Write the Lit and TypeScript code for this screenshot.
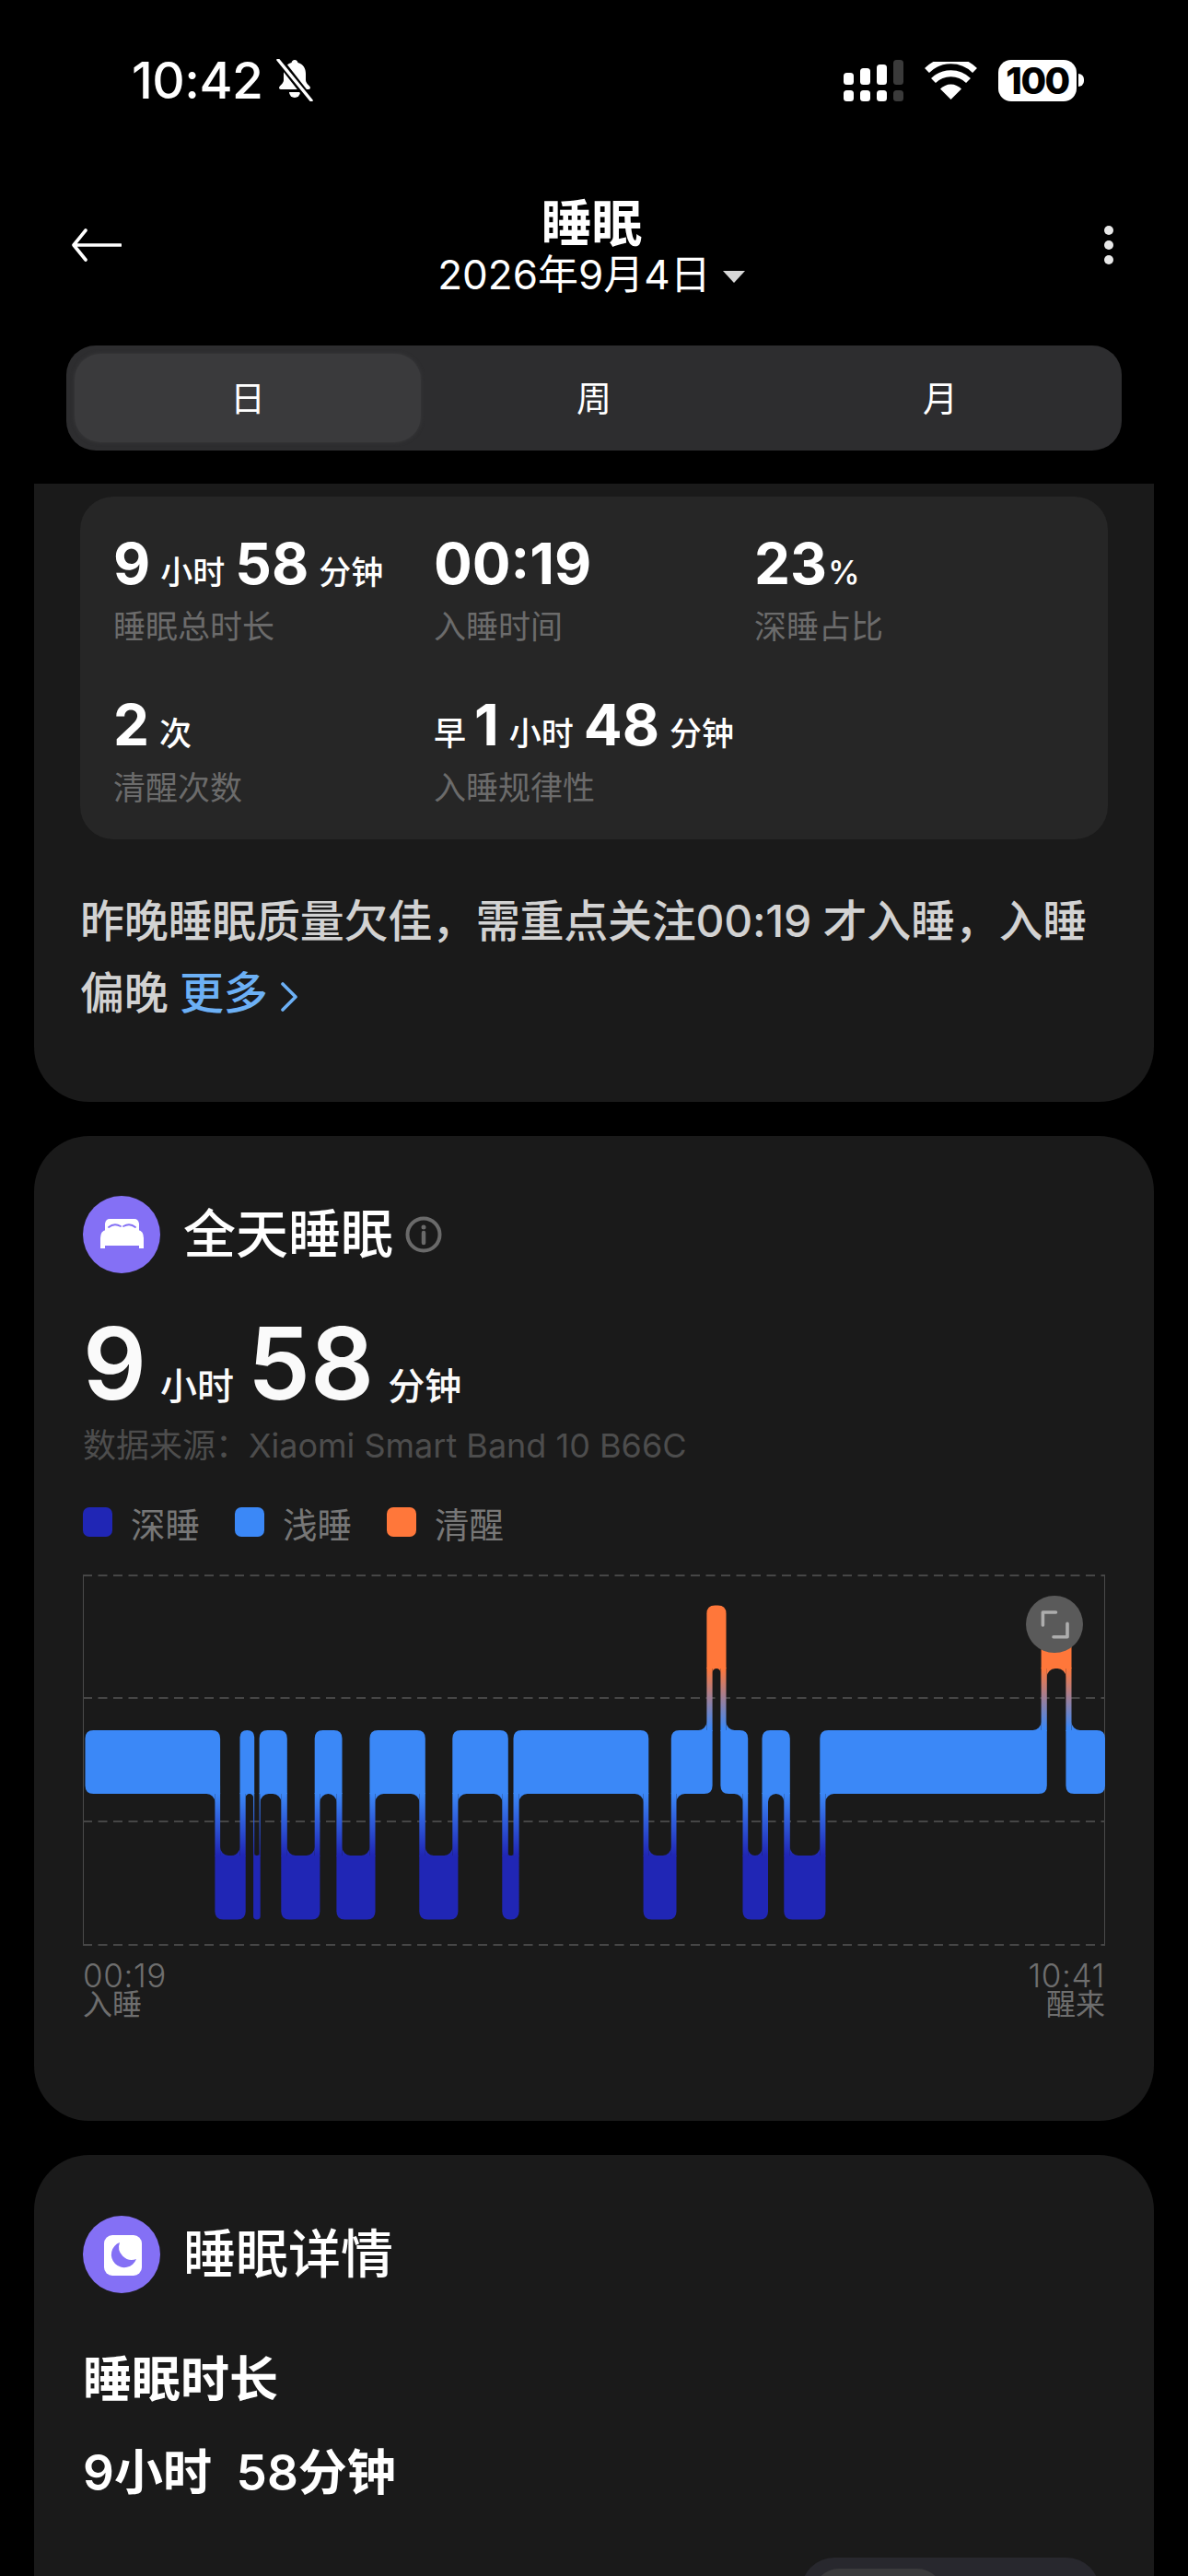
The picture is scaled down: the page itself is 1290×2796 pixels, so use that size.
import { LitElement, html, css, svg } from 'lit'
import { customElement } from 'lit/decorators.js'

type Stage = 'awake' | 'light' | 'deep'
type Block = [Stage, number, number]

const LEVELS: Record<Stage, [number, number]> = {
    awake: [33.5, 102],
    light: [169, 238],
    deep: [305, 374.5]
}

const BLOCKS: Block[] = [
    ['light', 2.5, 149.1],
    ['deep', 143.4, 176.7],
    ['light', 170.5, 186.2],
    ['deep', 185.1, 192.7],
    ['light', 191.6, 221.8],
    ['deep', 215.3, 257.4],
    ['light', 251.7, 281.5],
    ['deep', 275.4, 317.5],
    ['light', 311.4, 371.8],
    ['deep', 365.3, 407.4],
    ['light', 401.3, 461.8],
    ['deep', 455.3, 473.6],
    ['light', 467.5, 614.3],
    ['deep', 608.6, 644.5],
    ['light', 638.8, 683.6],
    ['awake', 677.4, 698.5],
    ['light', 692.4, 722.2],
    ['deep', 716.5, 744],
    ['light', 737.5, 767.8],
    ['deep', 761.3, 806.4],
    ['light', 800.3, 1046.8],
    ['awake', 1040.6, 1073.5],
    ['light', 1067.4, 1110]
]

const RADIUS = 9

const isAbove = (a: Block, b: Block) => LEVELS[a[0]][0] < LEVELS[b[0]][0]

// rounded rect for one stage, corners stay square where a connector joins
function blockPath(i: number) {
    const b = BLOCKS[i]
    const prev = BLOCKS[i - 1]
    const next = BLOCKS[i + 1]
    const [top, bottom] = LEVELS[b[0]]
    const [, x0, x1] = b
    const r = Math.min(RADIUS, (x1 - x0) / 2)
    const tl = prev && isAbove(prev, b) ? 0 : r
    const bl = prev && isAbove(b, prev) ? 0 : r
    const tr = next && isAbove(next, b) ? 0 : r
    const br = next && isAbove(b, next) ? 0 : r
    return `M${x0 + tl} ${top}H${x1 - tr}Q${x1} ${top} ${x1} ${top + tr}V${bottom - br}Q${x1} ${bottom} ${x1 - br} ${bottom}H${x0 + bl}Q${x0} ${bottom} ${x0} ${bottom - bl}V${top + tl}Q${x0} ${top} ${x0 + tl} ${top}Z`
}

function connectorPath(i: number) {
    const a = BLOCKS[i]
    const b = BLOCKS[i + 1]
    const upper = isAbove(a, b) ? a : b
    const lower = upper === a ? b : a
    const y0 = LEVELS[upper[0]][1] - 1
    const y1 = LEVELS[lower[0]][0] + 1
    return `M${b[1]} ${y0}H${a[2]}V${y1}H${b[1]}Z`
}

// concave corners where a connector leaves a block edge
function filletPaths(i: number) {
    const b = BLOCKS[i]
    const prev = BLOCKS[i - 1]
    const next = BLOCKS[i + 1]
    const out: string[] = []
    const add = (n: Block | undefined, other: Block | undefined, isPrev: boolean) => {
        if (!n) return
        const goesUp = isAbove(n, b)
        const p = isPrev ? n[2] : n[1]
        const dx = isPrev ? 1 : -1
        let avail: number
        if (other && isAbove(other, b) === goesUp) {
            const q = isPrev ? other[1] : other[2]
            avail = Math.abs(q - p) / 2
        } else {
            avail = Math.abs((isPrev ? b[2] : b[1]) - p) - RADIUS
        }
        const w = Math.max(0, Math.min(RADIUS, avail))
        if (!w) return
        const y = goesUp ? LEVELS[b[0]][0] : LEVELS[b[0]][1]
        const dy = goesUp ? -1 : 1
        const sweep = dx * dy > 0 ? 1 : 0
        out.push(`M${p} ${y + dy * w}A${w} ${w} 0 0 ${sweep} ${p + dx * w} ${y}V${y - dy * 0.6}H${p}Z`)
    }
    add(prev, next, true)
    add(next, prev, false)
    return out
}

function chartPieces() {
    const pieces: string[] = []
    BLOCKS.forEach((_, i) => {
        pieces.push(blockPath(i))
        pieces.push(...filletPaths(i))
        if (i < BLOCKS.length - 1) pieces.push(connectorPath(i))
    })
    return pieces
}

@customElement('app-root')
export class AppRoot extends LitElement {
    static styles = css`
        :host {
            display: block;
            width: 1290px;
            height: 2796px;
            overflow: hidden;
            background: #000;
            color: #fff;
            font-family: Inter, 'Noto Sans CJK SC', sans-serif;
        }

        .status {
            display: flex;
            align-items: center;
            justify-content: space-between;
            height: 46px;
            padding: 64px 113px 0 143px;
        }

        .status-left,
        .status-right {
            display: flex;
            align-items: center;
        }

        .clock {
            font-size: 55px;
            line-height: 46px;
            font-weight: 500;
            letter-spacing: -0.5px;
        }

        .bell {
            margin-left: 12px;
        }

        .wifi {
            margin: 0 23px 0 23px;
        }

        .battery {
            display: flex;
            align-items: center;
            gap: 2px;
        }

        .battery-body {
            width: 85px;
            height: 45px;
            border-radius: 14px;
            background: #fff;
            color: #000;
            font-size: 40px;
            font-weight: 800;
            line-height: 45px;
            text-align: center;
            letter-spacing: -1.5px;
        }

        .battery-nub {
            width: 6px;
            height: 14px;
            border-radius: 0 7px 7px 0;
            background: #fff;
        }

        .header {
            display: grid;
            grid-template-columns: 1fr auto 1fr;
            align-items: center;
            margin-top: 100px;
            padding: 0 83px 0 78px;
            height: 112px;
        }

        .back {
            width: 54px;
            height: 36px;
        }

        .more {
            display: flex;
            flex-direction: column;
            gap: 6px;
            justify-self: end;
            margin-right: -2px;
        }

        .more i {
            display: block;
            width: 10px;
            height: 10px;
            border-radius: 50%;
            background: #e8e8e8;
        }

        .heading {
            text-align: center;
        }

        .heading h1 {
            margin: 0;
            font-size: 55px;
            line-height: 64px;
            font-weight: 700;
        }

        .date {
            display: flex;
            align-items: center;
            justify-content: center;
            gap: 12px;
            font-size: 44px;
            line-height: 48px;
        }

        .caret {
            width: 26px;
            height: 14px;
            margin-top: 4px;
        }

        .tabs {
            display: grid;
            grid-template-columns: repeat(3, 1fr);
            margin: 53px 72px 0;
            padding: 9px;
            height: 96px;
            border-radius: 32px;
            background: #2d2d2f;
        }

        .tab {
            display: flex;
            align-items: center;
            justify-content: center;
            box-sizing: border-box;
            padding-bottom: 5px;
            border-radius: 28px;
            font-size: 38px;
        }

        .tab.on {
            background: #3a3a3c;
            box-shadow: 0 0 4px #3a3a3c;
        }

        .cards {
            display: flex;
            flex-direction: column;
            gap: 37px;
            margin-top: 36px;
            padding: 0 37px;
        }

        .card {
            background: #1a1a1a;
            border-radius: 60px;
        }

        .card-summary {
            height: 671px;
            box-sizing: border-box;
            padding: 14px 50px 0 50px;
            border-radius: 0 0 60px 60px;
        }

        .stats {
            display: grid;
            grid-template-columns: repeat(3, 348px);
            row-gap: 50px;
            box-sizing: border-box;
            height: 372px;
            padding: 38px 0 0 36px;
            border-radius: 36px;
            background: #262626;
            align-content: start;
        }

        .stat-value {
            height: 70px;
            font-size: 62px;
            line-height: 70px;
            font-weight: 700;
            white-space: nowrap;
        }

        .unit {
            font-size: 35px;
            font-weight: 500;
            margin: 0 11px;
        }

        .unit.end {
            margin-right: 0;
        }

        .unit.tight {
            margin-left: 1px;
        }

        .unit.lead {
            margin: 0 9px 0 0;
        }

        .stat-label {
            margin-top: 11px;
            font-size: 35px;
            line-height: 44px;
            color: #6b6b6b;
        }

        .summary {
            margin: 50px 0 0;
            font-size: 48px;
            line-height: 78px;
            font-weight: 500;
            letter-spacing: -0.25px;
            color: #d2d2d2;
            white-space: nowrap;
        }

        .link {
            color: #6cb0f5;
        }

        .chevron {
            width: 18px;
            height: 32px;
            margin-left: 14px;
            vertical-align: -3px;
        }

        .card-sleep {
            height: 1069px;
            box-sizing: border-box;
            padding: 65px 53px 0;
        }

        .card-head {
            display: flex;
            align-items: center;
        }

        .badge {
            width: 84px;
            height: 84px;
            flex: none;
        }

        .card-title {
            margin-left: 25px;
            font-size: 57px;
            font-weight: 500;
            line-height: 84px;
        }

        .info {
            width: 40px;
            height: 40px;
            margin-left: 13px;
        }

        .big-value {
            margin-top: 38px;
            height: 120px;
            font-size: 108px;
            line-height: 120px;
            font-weight: 600;
            color: #fafafa;
            white-space: nowrap;
        }

        .big-unit {
            font-size: 40px;
            font-weight: 500;
            margin: 0 15px 0 15px;
        }

        .source {
            margin-top: 7px;
            font-size: 36px;
            line-height: 44px;
            color: #4d4d4d;
            white-space: nowrap;
        }

        .legend {
            display: flex;
            margin-top: 39px;
            height: 44px;
            align-items: center;
        }

        .legend-item {
            display: flex;
            align-items: center;
            gap: 20px;
            font-size: 37.5px;
            color: #777;
            margin-right: 38px;
        }

        .swatch {
            width: 32px;
            height: 32px;
            border-radius: 7px;
        }

        .chart {
            position: relative;
            margin-top: 35px;
            width: 1110px;
            height: 403px;
        }

        .chart svg {
            display: block;
        }

        .expand {
            position: absolute;
            left: 1024px;
            top: 23px;
            width: 62px;
            height: 62px;
        }

        .times {
            display: flex;
            justify-content: space-between;
            width: 1110px;
            margin-top: 17px;
            color: #6e6e6e;
            font-size: 32px;
            line-height: 31px;
        }

        .times .clock-time {
            font-size: 35px;
            font-weight: 300;
            letter-spacing: 0.6px;
        }

        .times .right {
            text-align: right;
        }

        .card-detail {
            height: 600px;
            padding: 66px 53px 0;
            box-sizing: border-box;
        }

        .detail-name {
            margin-top: 62px;
            font-size: 53px;
            line-height: 64px;
            font-weight: 600;
        }

        .detail-value {
            margin-top: 37px;
            font-size: 53px;
            line-height: 64px;
            font-weight: 600;
            white-space: pre;
        }

        .pill-row {
            display: flex;
            justify-content: flex-end;
            margin: 60px 6px 0 0;
        }

        .pill {
            width: 324px;
            height: 114px;
            box-sizing: border-box;
            padding: 12px 13px;
            border-radius: 36px;
            background: #28282e;
        }

        .pill i {
            display: block;
            width: 141px;
            height: 90px;
            border-radius: 28px;
            background: #3a3a3c;
        }
    `

    renderStatus() {
        return html`
            <div class="status">
                <div class="status-left">
                    <span class="clock">10:42</span>
                    <svg class="bell" width="44" height="46" viewBox="0 0 44 46">
                        <path fill="#fff" d="M22 1c-2 0-3.2 1.4-3.4 3C12.5 5.6 10 10.5 10 16v7c0 3-3 5-4.5 7-1 1.5-.3 3 1.6 3h29.8c1.900 0 2.600-1.500 1.600-3-1.500-2-4.500-4-4.500-7v-7c0-5.500-2.500-10.400-8.600-12C25.200 2.400 24 1 22 1z" />
                        <path fill="#fff" d="M16 36a6 6 0 0012 0z" />
                        <path stroke="#000" stroke-width="8" d="M4 0l36 46" />
                        <path stroke="#fff" stroke-width="3.4" stroke-linecap="round" d="M4 1l36 44" />
                    </svg>
                </div>
                <div class="status-right">
                    <svg width="65" height="45" viewBox="0 0 65 45">
                        <rect x="0" y="14" width="11" height="13" rx="3.5" fill="#fff" />
                        <rect x="18" y="9" width="11" height="18" rx="3.5" fill="#fff" />
                        <rect x="36" y="5" width="11" height="22" rx="3.5" fill="#fff" />
                        <rect x="54" y="0" width="11" height="27" rx="3.5" fill="#3a3a3a" />
                        <rect x="0" y="33" width="11" height="12" rx="3.5" fill="#fff" />
                        <rect x="18" y="33" width="11" height="12" rx="3.5" fill="#fff" />
                        <rect x="36" y="33" width="11" height="12" rx="3.5" fill="#fff" />
                        <rect x="54" y="33" width="11" height="12" rx="3.5" fill="#3a3a3a" />
                    </svg>
                    <svg class="wifi" width="57" height="41" viewBox="0 0 57 41">
                        <path fill="#fff" d="M28.5 41L17 29.5a16 16 0 0 1 23 0z" />
                        <path fill="none" stroke="#fff" stroke-width="7" d="M9.500 20.500a27 27 0 0 1 38 0" />
                        <path fill="none" stroke="#fff" stroke-width="7" d="M2.500 9.500a37 37 0 0 1 52 0" />
                    </svg>
                    <div class="battery">
                        <div class="battery-body">100</div>
                        <div class="battery-nub"></div>
                    </div>
                </div>
            </div>
        `
    }

    renderHeader() {
        return html`
            <div class="header">
                <svg class="back" viewBox="0 0 54 36" fill="none" stroke="#fff" stroke-width="3.6" stroke-linecap="round" stroke-linejoin="round">
                    <path d="M53 18H2M15 2L2 18l13 16" />
                </svg>
                <div class="heading">
                    <h1>睡眠</h1>
                    <div class="date">
                        <span>2026年9月4日</span>
                        <svg class="caret" viewBox="0 0 26 14"><path fill="#d8d8d8" d="M1 1h24L13 14z" /></svg>
                    </div>
                </div>
                <div class="more"><i></i><i></i><i></i></div>
            </div>
            <div class="tabs">
                <div class="tab on">日</div>
                <div class="tab">周</div>
                <div class="tab">月</div>
            </div>
        `
    }

    renderSummary() {
        return html`
            <section class="card card-summary">
                <div class="stats">
                    <div>
                        <div class="stat-value">9<span class="unit">小时</span>58<span class="unit end">分钟</span></div>
                        <div class="stat-label">睡眠总时长</div>
                    </div>
                    <div>
                        <div class="stat-value">00:19</div>
                        <div class="stat-label">入睡时间</div>
                    </div>
                    <div>
                        <div class="stat-value">23<span class="unit end tight">%</span></div>
                        <div class="stat-label">深睡占比</div>
                    </div>
                    <div>
                        <div class="stat-value">2<span class="unit end">次</span></div>
                        <div class="stat-label">清醒次数</div>
                    </div>
                    <div>
                        <div class="stat-value"><span class="unit lead">早</span>1<span class="unit">小时</span>48<span class="unit end">分钟</span></div>
                        <div class="stat-label">入睡规律性</div>
                    </div>
                </div>
                <p class="summary">
                    昨晚睡眠质量欠佳，需重点关注00:19 才入睡，入睡<br />偏晚 <span class="link">更多<svg class="chevron" viewBox="0 0 18 32" fill="none" stroke="#6cb0f5" stroke-width="3.6" stroke-linecap="round" stroke-linejoin="round"><path d="M2 2l14 14L2 30" /></svg></span>
                </p>
            </section>
        `
    }

    renderChart() {
        const grid = [1, 134, 268, 402]
        return html`
            <div class="chart">
                <svg width="1110" height="403" viewBox="0 0 1110 403">
                    <defs>
                        <linearGradient id="stages" gradientUnits="userSpaceOnUse" x1="0" y1="102" x2="0" y2="305">
                            <stop offset="0" stop-color="#ff773a" />
                            <stop offset="0.32" stop-color="#3b88f7" />
                            <stop offset="0.67" stop-color="#3b88f7" />
                            <stop offset="1" stop-color="#2026b5" />
                        </linearGradient>
                    </defs>
                    <path d="M.5 0V403M1109.500 0V403" stroke="#4a4a4a" stroke-width="1" />
                    ${grid.map(y => svg`<path d="M0 ${y}H1110" stroke="#464646" stroke-width="2" stroke-dasharray="10 6.500" />`)}
                    <g fill="url(#stages)">
                        ${chartPieces().map(d => svg`<path d=${d} />`)}
                    </g>
                </svg>
                <svg class="expand" viewBox="0 0 62 62">
                    <circle cx="31" cy="31" r="31" fill="#5a5a5a" />
                    <path d="M18.400 32V18H32.500M30 44.800H45V30.200" fill="none" stroke="#adadad" stroke-width="3.6" stroke-linecap="round" stroke-linejoin="round" />
                </svg>
            </div>
        `
    }

    renderSleep() {
        return html`
            <section class="card card-sleep">
                <div class="card-head">
                    <svg class="badge" viewBox="0 0 84 84">
                        <circle cx="42" cy="42" r="42" fill="#8470f5" />
                        <path fill="#fff" d="M24 30q1-5 5-5h27q4 0 5 5v10H24z" />
                        <path fill="none" stroke="#8470f5" stroke-width="1.8" stroke-linecap="round" d="M28 34q6-5 13-1M44 33q7-4 13 1" />
                        <path fill="#fff" d="M19 46q0-8 6-9h35q6 1 6 9v8H19z" />
                        <rect x="19" y="53" width="5" height="4" fill="#fff" />
                        <rect x="61" y="53" width="5" height="4" fill="#fff" />
                    </svg>
                    <span class="card-title">全天睡眠</span>
                    <svg class="info" viewBox="0 0 40 40" fill="none" stroke="#6a6a6a">
                        <circle cx="20" cy="20" r="17.500" stroke-width="4" />
                        <path d="M20 18v11" stroke-width="4.500" stroke-linecap="round" />
                        <circle cx="20" cy="12" r="2.500" fill="#6a6a6a" stroke="none" />
                    </svg>
                </div>
                <div class="big-value">9<span class="big-unit">小时</span>58<span class="big-unit">分钟</span></div>
                <div class="source">数据来源：Xiaomi Smart Band 10 B66C</div>
                <div class="legend">
                    <div class="legend-item"><span class="swatch" style="background:#2026b5"></span>深睡</div>
                    <div class="legend-item"><span class="swatch" style="background:#3b88f7"></span>浅睡</div>
                    <div class="legend-item"><span class="swatch" style="background:#ff773a"></span>清醒</div>
                </div>
                ${this.renderChart()}
                <div class="times">
                    <div><div class="clock-time">00:19</div><div>入睡</div></div>
                    <div class="right"><div class="clock-time">10:41</div><div>醒来</div></div>
                </div>
            </section>
        `
    }

    renderDetail() {
        return html`
            <section class="card card-detail">
                <div class="card-head">
                    <svg class="badge" viewBox="0 0 84 84">
                        <circle cx="42" cy="42" r="42" fill="#8470f5" />
                        <rect x="23" y="21" width="41" height="44" rx="9" fill="#fff" />
                        <path fill="#8470f5" d="M40 29A14 14 0 1 0 58 47A14 14 0 0 1 40 29Z" />
                    </svg>
                    <span class="card-title">睡眠详情</span>
                </div>
                <div class="detail-name">睡眠时长</div>
                <div class="detail-value">9小时  58分钟</div>
                <div class="pill-row"><div class="pill"><i></i></div></div>
            </section>
        `
    }

    render() {
        return html`
            ${this.renderStatus()} ${this.renderHeader()}
            <div class="cards">${this.renderSummary()} ${this.renderSleep()} ${this.renderDetail()}</div>
        `
    }
}
